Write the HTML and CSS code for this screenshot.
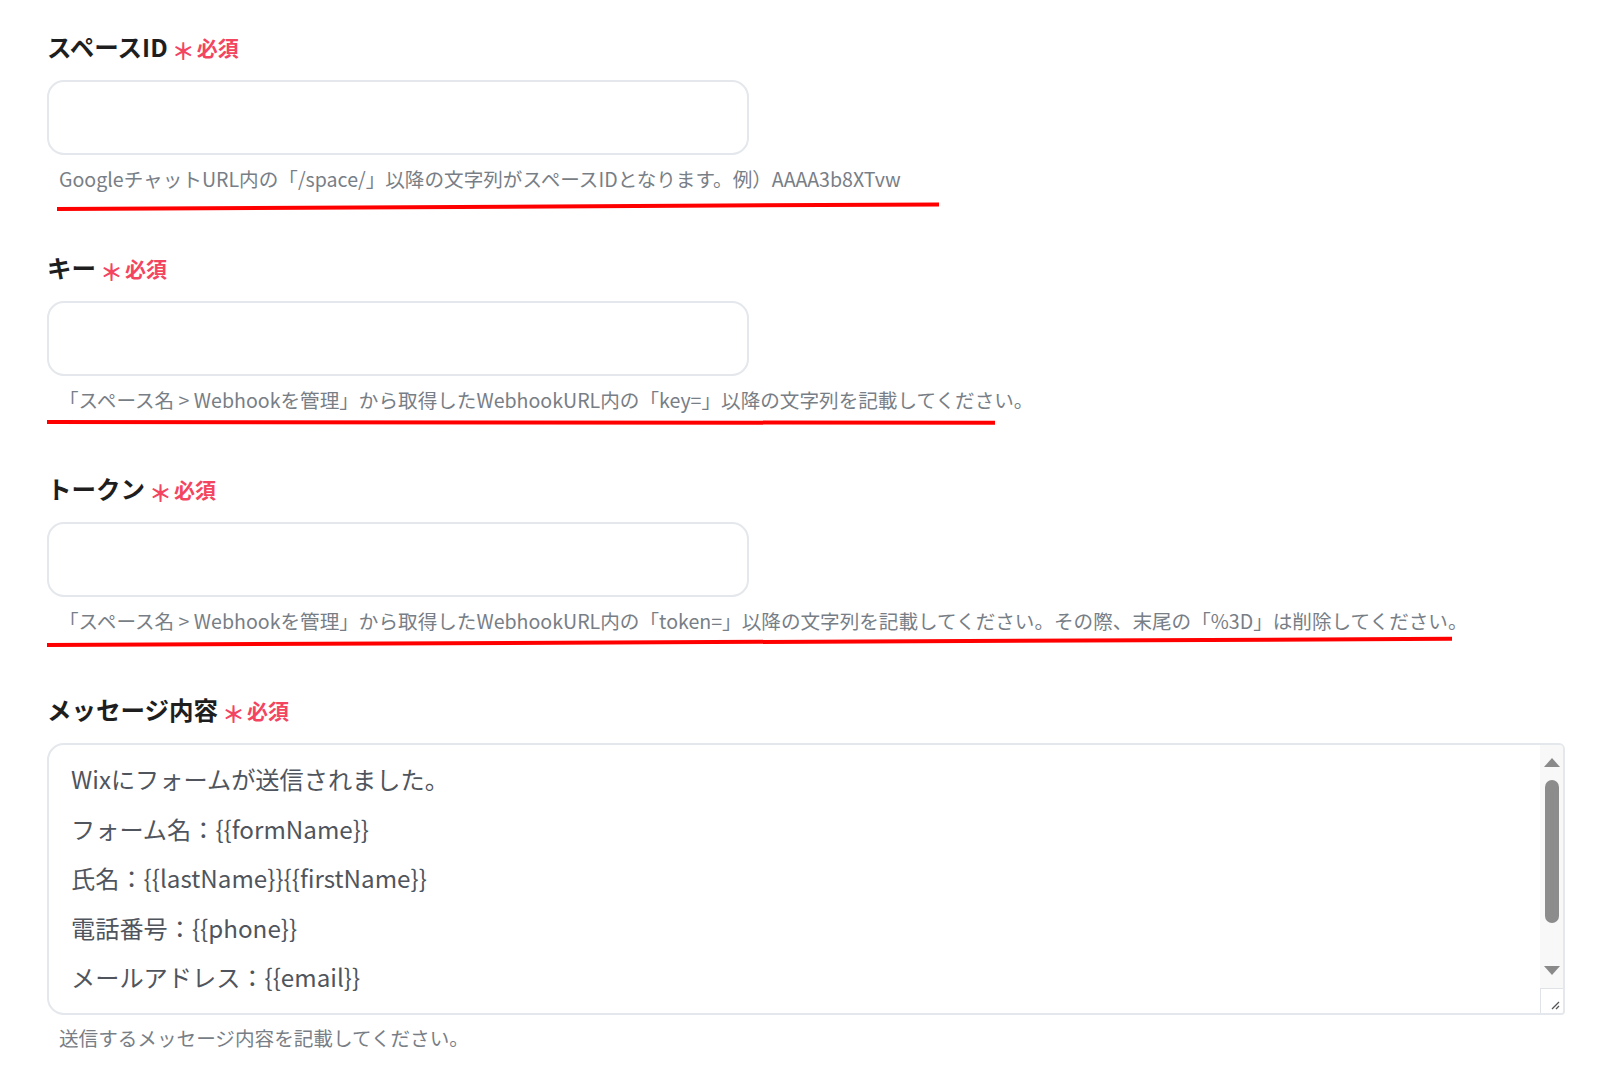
FILE: index.html
```html
<!DOCTYPE html>
<html lang="ja">
<head>
<meta charset="utf-8">
<title>Google Chat 設定</title>
<link rel="stylesheet" href="styles.css">
</head>
<body>
<div class="form">
  <div class="field">
    <div class="label">スペースID<span class="req"><span class="ast">＊</span>必須</span></div>
    <div class="input"></div>
    <p class="help">GoogleチャットURL内の「/space/」以降の文字列がスペースIDとなります。例）AAAA3b8XTvw</p>
    <div class="mark mark1"></div>
  </div>
  <div class="field">
    <div class="label">キー<span class="req"><span class="ast">＊</span>必須</span></div>
    <div class="input"></div>
    <p class="help">「スペース名 &gt; Webhookを管理」から取得したWebhookURL内の「key=」以降の文字列を記載してください。</p>
    <div class="mark mark2"></div>
  </div>
  <div class="field">
    <div class="label">トークン<span class="req"><span class="ast">＊</span>必須</span></div>
    <div class="input"></div>
    <p class="help">「スペース名 &gt; Webhookを管理」から取得したWebhookURL内の「token=」以降の文字列を記載してください。その際、末尾の「%3D」は削除してください。</p>
    <div class="mark mark3"></div>
  </div>
  <div class="field last">
    <div class="label">メッセージ内容<span class="req"><span class="ast">＊</span>必須</span></div>
    <div class="textarea">
      <div class="content">
        <div class="line">Wixにフォームが送信されました。</div>
        <div class="line">フォーム名：{{formName}}</div>
        <div class="line">氏名：{{lastName}}{{firstName}}</div>
        <div class="line">電話番号：{{phone}}</div>
        <div class="line">メールアドレス：{{email}}</div>
      </div>
      <div class="scrollbar">
        <div class="arrow up"></div>
        <div class="track"><div class="thumb"></div></div>
        <div class="arrow down"></div>
        <div class="grip">
          <svg width="12" height="12" viewBox="0 0 12 12"><path d="M11 4 L4 11 M11 8 L8 11" stroke="#555" stroke-width="1.3" fill="none"/></svg>
        </div>
      </div>
    </div>
    <p class="help">送信するメッセージ内容を記載してください。</p>
  </div>
</div>
</body>
</html>
```
FILE: styles.css
```css
* { box-sizing: border-box; }
html, body { margin: 0; padding: 0; background: #ffffff; }
body {
  font-family: "Noto Sans CJK JP", "Noto Sans", sans-serif;
  color: #222;
}
.form {
  padding: 31px 0 0 47px;
  display: flex;
  flex-direction: column;
  gap: 59px;
}
.field {
  position: relative;
  display: flex;
  flex-direction: column;
}
.label {
  height: 32px;
  line-height: 32px;
  font-size: 24.5px;
  font-weight: 700;
  color: #1e1e1e;
  display: flex;
  align-items: center;
}
.req {
  display: inline-flex;
  align-items: center;
  margin-left: 4px;
  color: #f3455f;
  font-size: 21px;
  font-weight: 700;
}
.ast {
  font-size: 23px;
  margin-right: 2px;
  position: relative;
  top: 3px;
}
.input {
  margin-top: 17px;
  width: 702px;
  height: 75px;
  border: 2px solid #e4e7eb;
  border-radius: 17px;
  background: #fff;
}
.help {
  margin: 10px 0 0 12px;
  height: 28px;
  line-height: 28px;
  font-size: 19.6px;
  color: #787e86;
  white-space: nowrap;
}
.mark {
  position: absolute;
  height: 4px;
  background: #ff0000;
  transform-origin: left center;
}
.mark1 { top: 176px; left: 10px; width: 882px; transform: rotate(-0.3deg); }
.mark2 { top: 168px; left: 0; width: 948px; transform: rotate(0.05deg); }
.mark3 { top: 170px; left: 0; width: 1405px; transform: rotate(-0.25deg); }

.textarea {
  margin-top: 17px;
  width: 1518px;
  height: 272px;
  border: 2px solid #e4e7eb;
  border-radius: 17px 6px 4px 17px;
  display: flex;
  overflow: hidden;
  background: #fff;
}
.content {
  flex: 1;
  padding: 9px 0 0 22px;
  font-size: 24.2px;
  color: #50555d;
}
.line {
  height: 49.5px;
  line-height: 49.5px;
  white-space: nowrap;
}
.scrollbar {
  width: 23px;
  background: #f8f8f8;
  display: flex;
  flex-direction: column;
  align-items: center;
}
.arrow {
  width: 0;
  height: 0;
  border-left: 8px solid transparent;
  border-right: 8px solid transparent;
}
.arrow.up {
  margin-top: 13px;
  border-bottom: 9px solid #8a8a8a;
}
.arrow.down {
  margin-top: 0;
  border-top: 9px solid #8a8a8a;
}
.track {
  flex: 1;
  width: 100%;
  display: flex;
  justify-content: center;
  padding: 13px 0 0 0;
}
.thumb {
  width: 14px;
  height: 143px;
  border-radius: 7px;
  background: #8c8c8c;
}
.grip {
  margin-top: 13px;
  width: 23px;
  height: 25px;
  background: #fff;
  border-top: 1px solid #dfe2e6;
  border-left: 1px solid #dfe2e6;
  display: flex;
  align-items: flex-end;
  justify-content: flex-end;
  padding: 0 3px 3px 0;
}
.field.last .help { margin-top: 9px; }
```
